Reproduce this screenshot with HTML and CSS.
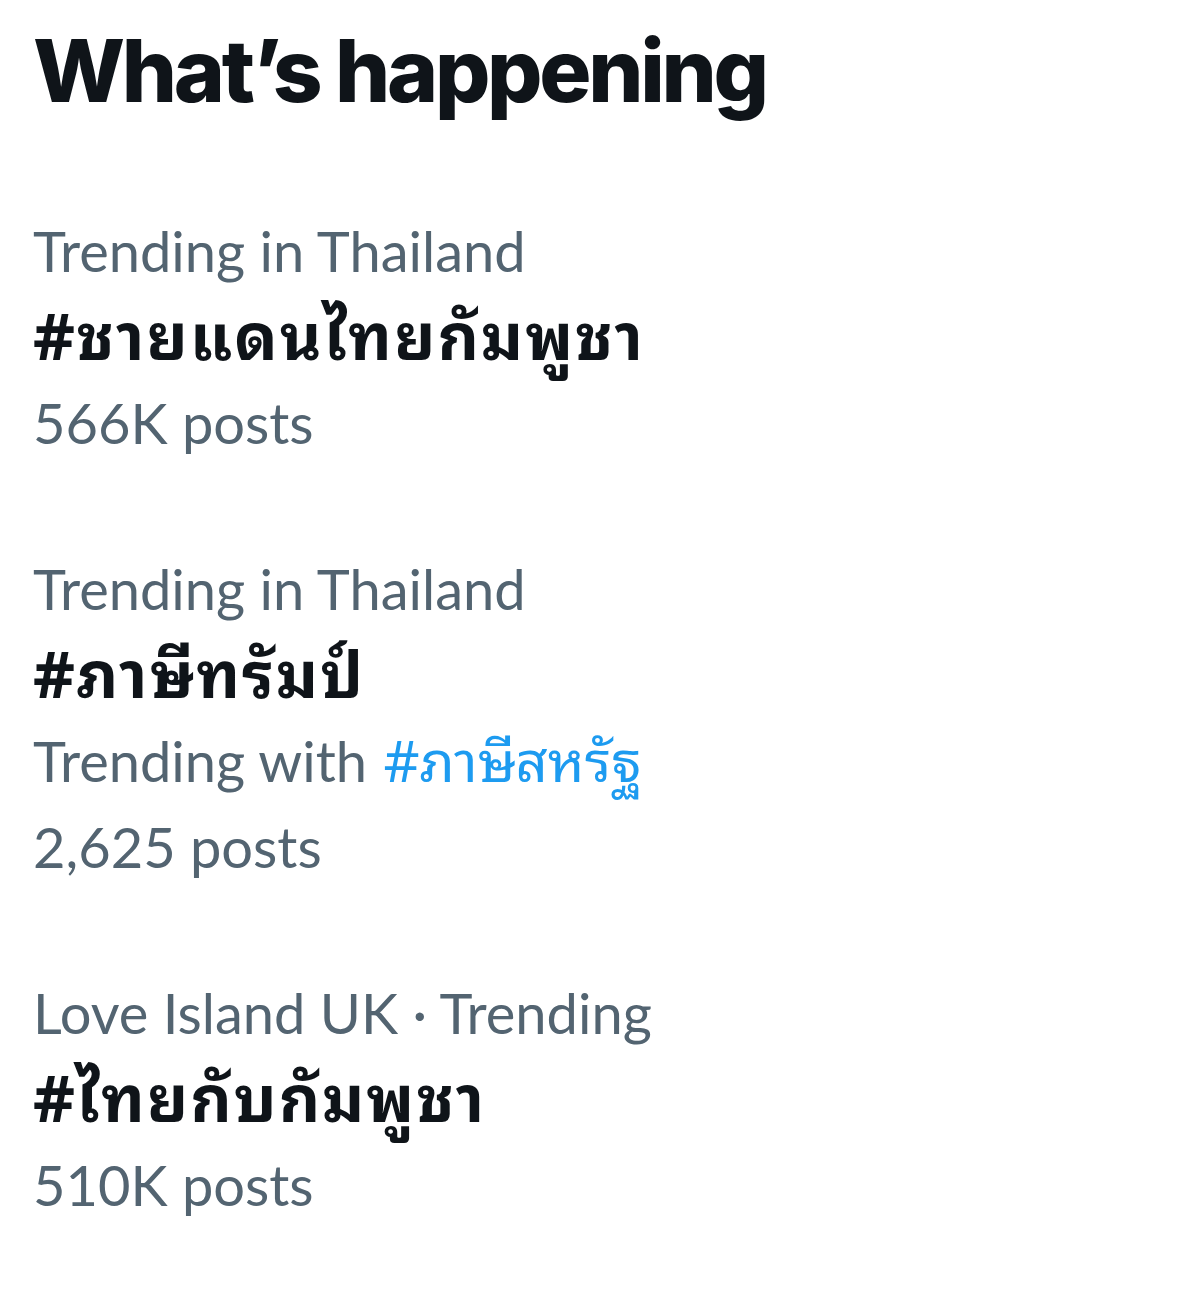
FILE: index.html
```html
<!DOCTYPE html>
<html lang="en">
<head>
<meta charset="UTF-8">
<meta name="viewport" content="width=device-width, initial-scale=1.0">
<title>What's happening</title>
<link rel="stylesheet" href="styles.css">
</head>
<body>
<div class="trends">
    <h2>What’s happening</h2>

    <div class="trend">
        <div class="meta">Trending in Thailand</div>
        <div class="tag">#ชายแดนไทยกัมพูชา</div>
        <div class="meta">566K posts</div>
    </div>

    <div class="trend">
        <div class="meta">Trending in Thailand</div>
        <div class="tag">#ภาษีทรัมป์</div>
        <div class="meta">Trending with <a class="link" href="#">#ภาษีสหรัฐ</a></div>
        <div class="meta">2,625 posts</div>
    </div>

    <div class="trend">
        <div class="meta">Love Island UK · Trending</div>
        <div class="tag">#ไทยกับกัมพูชา</div>
        <div class="meta">510K posts</div>
    </div>
</div>
</body>
</html>
```

FILE: styles.css
```css
body {
    margin: 0;
    background-color: #fff;
    font-family: Lato, "Noto Sans", sans-serif;
}

.trends {
    padding: 19px 33px 40px;
}

h2 {
    margin: 0 0 45px;
    font-family: Inter, "Liberation Sans", sans-serif;
    font-size: 87px;
    font-weight: 800;
    line-height: 1.2;
    letter-spacing: -3.3px;
    color: #0f1419;
}

.trend {
    padding: 40px 0;
}

.meta {
    font-size: 56px;
    line-height: 86px;
    color: #536471;
}

.tag {
    padding-bottom: 12px;
    font-family: "Noto Sans Thai Looped", "Noto Sans", sans-serif;
    font-size: 64px;
    font-weight: 700;
    line-height: 74px;
    letter-spacing: 2px;
    color: #0f1419;
}

.link {
    margin-left: 2px;
    font-family: "Noto Sans Thai Looped", "Noto Sans", sans-serif;
    font-size: 56px;
    line-height: 0;
    color: #1d9bf0;
    text-decoration: none;
}
```
